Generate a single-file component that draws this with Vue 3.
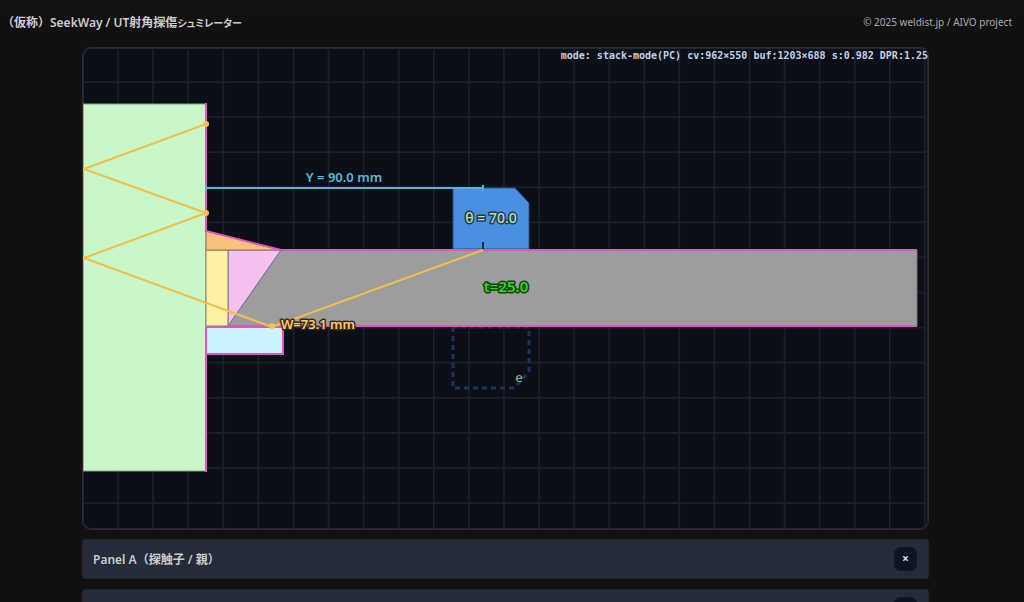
<script setup>
const columns = Array.from({ length: 24 }, (_, i) => (i + 1) * 40)
const rows = Array.from({ length: 13 }, (_, i) => (i + 1) * 40)
</script>

<template>
  <div class="page">
    <header class="top">
      <h1>（仮称）SeekWay / UT射角探傷<span class="kana">シュミレーター</span></h1>
      <small>© 2025 weldist.jp / AIVO project</small>
    </header>
    <main class="stack">
      <section class="stage">
        <svg class="view" viewBox="83 48 845 481">
          <g class="grid" transform="translate(83 47) scale(0.877)">
            <line v-for="x in columns" :key="'c' + x" :x1="x" y1="0" :x2="x" y2="560" />
            <line v-for="y in rows" :key="'r' + y" x1="0" :y1="y" x2="970" :y2="y" />
          </g>

          <polygon class="probe" points="453,188 515,188 529,203 529,249 453,249" />
          <path class="ghost" d="M453 327V388H514L529 372V327Z" />

          <rect class="column" x="83" y="104" width="123" height="367" />
          <polygon class="plate" points="281,250 917,250 917,326 228,326" />
          <polygon class="bevel" points="228,250 281,250 228,326" />
          <rect class="root" x="206" y="250" width="22" height="76" />
          <polygon class="fillet" points="206,231 281,250 206,250" />
          <rect class="backing" x="206" y="327" width="77" height="27" />

          <path class="edge" d="M206 103V231L281 250H917M206 327V472M228 326H917M206 327H283V354H206" />
          <path class="edge thin" d="M83 104V471" />

          <path class="measure" d="M206 188H483M206 185V191M483 185V191" />
          <path class="index" d="M483 242V249" />
          <path class="beam" d="M483 250L272 327L84 258L206 213L84 169L206 124" />
          <g class="hits">
            <circle cx="272" cy="326" r="3" />
            <circle cx="206" cy="213" r="3" />
            <circle cx="206" cy="124" r="3" />
            <circle cx="84" cy="169" r="2" />
            <circle cx="84" cy="258" r="2" />
          </g>

          <text class="distance" x="344" y="182">Y = 90.0 mm</text>
          <text class="angle" x="491" y="223">θ = 70.0</text>
          <text class="thickness" x="506" y="292">t=25.0</text>
          <text class="path" x="318" y="329">W=73.1 mm</text>
          <text class="turn" transform="translate(519 375) rotate(180)">ə</text>
        </svg>
        <output class="mode">mode: stack-mode(PC) cv:962×550 buf:1203×688 s:0.982 DPR:1.25</output>
      </section>
      <section class="panel">
        <h2>Panel A（探触子 / 親）</h2>
        <button type="button" aria-label="Panel A">×</button>
      </section>
      <section class="panel">
        <h2></h2>
        <button type="button" aria-label="Panel B"></button>
      </section>
    </main>
  </div>
</template>

<style>
body { background: #111; overflow: hidden; }
</style>

<style scoped>
.page {
  height: 100vh;
  overflow: hidden;
  background: linear-gradient(#101218, #111 16px);
  color: #ccc;
  font-family: "Noto Sans", "Noto Sans CJK JP", sans-serif;
}
.top {
  display: flex;
  align-items: center;
  justify-content: space-between;
  height: 44px;
  padding: 0 12px 0 2px;
}
h1, h2 { margin: 0; font-size: 12px; font-weight: 600; text-spacing-trim: space-all; }
.kana { font-size: 10px; font-feature-settings: "palt"; }
small { font-size: 10px; color: #aaa; }
.stack {
  display: flex;
  flex-direction: column;
  gap: 10px;
  max-width: 847px;
  margin: 3px auto 0;
  padding-right: 13px;
}
.stage {
  position: relative;
  margin-bottom: -1px;
  border: 1px solid #2a2d33;
  border-radius: 9px;
  overflow: hidden;
  background: #0b0f18;
  box-shadow: inset 0 0 0 1px #22262e;
}
.view { display: block; width: 100%; height: auto; }
.mode {
  position: absolute;
  top: 0;
  right: 0;
  font: bold 10px/16px "DejaVu Sans Mono", monospace;
  color: #c5d0e6;
}
.panel {
  display: flex;
  flex: none;
  align-items: center;
  justify-content: space-between;
  height: 40px;
  box-sizing: border-box;
  padding: 0 11px 0 10px;
  border: 1px solid #1e2533;
  border-radius: 3px;
  background: #262b3a;
}
button {
  width: 23px;
  height: 24px;
  padding: 0;
  border: 1px solid #111a2b;
  border-radius: 6px;
  background: #0c1322;
  color: #ddd;
  font: bold 12px/20px "Noto Sans", sans-serif;
}
.grid line { stroke: #1c202a; stroke-width: 2; }
.column { fill: #c8f8ca; stroke: #8a9a8d; }
.plate { fill: #9d9d9d; stroke: #777; }
.bevel { fill: #f5c0ef; stroke: #7572a0; }
.root { fill: #fcf1a4; stroke: #867d58; }
.fillet { fill: #fac17e; stroke: #9a7048; }
.backing { fill: #c9f4ff; }
.probe { fill: #4a90e2; stroke: #294c7c; }
.ghost { fill: none; stroke: #1e3358; stroke-width: 3; stroke-dasharray: 5 4; }
.edge { fill: none; stroke: #df57bd; stroke-width: 2; }
.edge.thin { stroke-width: 1; }
.measure { fill: none; stroke: #54b4dc; stroke-width: 2; }
.index { stroke: #10243e; stroke-width: 2; }
.beam { fill: none; stroke: #f1c04b; stroke-width: 2; stroke-linejoin: round; }
.hits { fill: #f5c444; }
text {
  text-anchor: middle;
  font-size: 13px;
  font-weight: 500;
  paint-order: stroke;
  stroke-width: 3;
  stroke-linejoin: round;
}
.distance { fill: #5eb5dc; font-weight: 600; }
.angle { fill: #b5e4ab; stroke: #243a50; font-size: 14px; }
.thickness { fill: #2ed813; stroke: #174015; font-size: 15px; font-weight: 600; }
.path { fill: #f7ce73; stroke: #3c2c16; font-weight: 600; }
.turn { fill: #8caaa2; }
</style>
